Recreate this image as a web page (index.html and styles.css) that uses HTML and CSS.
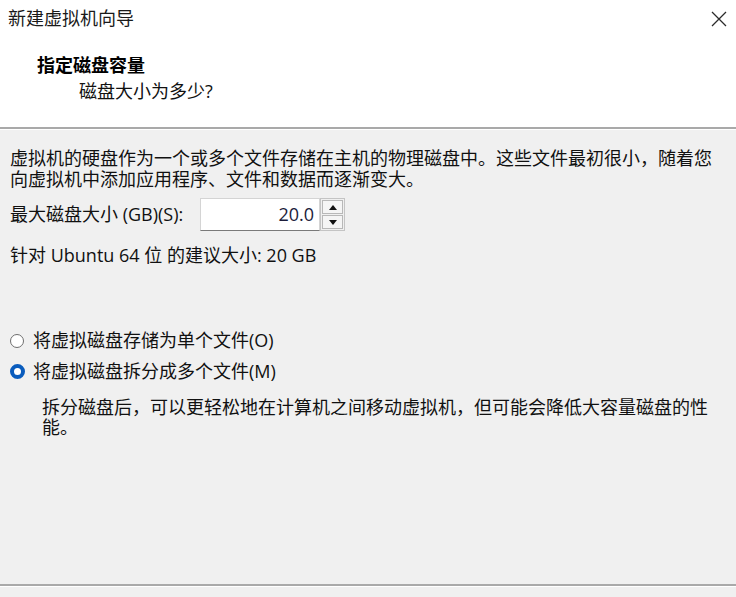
FILE: index.html
```html
<!DOCTYPE html>
<html lang="zh-CN">
<head>
    <meta charset="UTF-8">
    <meta name="viewport" content="width=device-width, initial-scale=1.0">
    <title>新建虚拟机向导</title>
    <link rel="stylesheet" href="styles.css">
</head>
<body>
    <div class="header">
        <div class="title-row">
            <span class="title">新建虚拟机向导</span>
            <svg class="close" width="16" height="16" viewBox="0 0 16 16">
                <path d="M1 1L15 15M15 1L1 15" stroke="#2b2b2b" stroke-width="1.3" fill="none"/>
            </svg>
        </div>
        <div class="heading">指定磁盘容量</div>
        <div class="subheading">磁盘大小为多少?</div>
    </div>
    <div class="separator"></div>

    <div class="content">
        <p class="intro">虚拟机的硬盘作为一个或多个文件存储在主机的物理磁盘中。这些文件最初很小，随着您向虚拟机中添加应用程序、文件和数据而逐渐变大。</p>

        <div class="size-row">
            <label class="size-label">最大磁盘大小 (GB)(S):</label>
            <div class="spinner">
                <div class="spinner-value">20.0</div>
                <div class="spinner-buttons">
                    <div class="spin-btn"><span class="arrow-up"></span></div>
                    <div class="spin-btn"><span class="arrow-down"></span></div>
                </div>
            </div>
        </div>

        <p class="hint">针对 Ubuntu 64 位 的建议大小: 20 GB</p>

        <div class="options">
            <div class="option">
                <span class="radio"></span>
                <span>将虚拟磁盘存储为单个文件(O)</span>
            </div>
            <div class="option">
                <span class="radio checked"></span>
                <span>将虚拟磁盘拆分成多个文件(M)</span>
            </div>
            <p class="option-desc">拆分磁盘后，可以更轻松地在计算机之间移动虚拟机，但可能会降低大容量磁盘的性能。</p>
        </div>
    </div>

    <div class="separator"></div>
    <div class="footer"></div>
</body>
</html>
```

FILE: styles.css
```css
body {
    margin: 0;
    background-color: #f0f0f0;
    font-family: "Open Sans", "Noto Sans CJK SC", sans-serif;
    font-size: 18px;
    line-height: 21px;
    color: #111;
}

.header {
    background-color: #fff;
    height: 127px;
    box-sizing: border-box;
    padding-top: 8px;
}

.title-row {
    display: flex;
    justify-content: space-between;
    align-items: center;
    padding: 0 9px 0 8px;
}

.title {
    color: #1a1a1a;
}

.close {
    display: block;
}

.heading {
    font-weight: bold;
    margin-top: 26px;
    margin-left: 37px;
    color: #000;
}

.subheading {
    margin-top: 5px;
    margin-left: 79px;
}

.separator {
    height: 2px;
    background-color: #a9a9a9;
    border-bottom: 1px solid #fff;
}

.content {
    height: 454px;
    box-sizing: border-box;
    padding: 18px 14px 0 10px;
}

.content p {
    margin: 0;
}

.size-row {
    display: flex;
    align-items: center;
    margin-top: 8px;
}

.size-label {
    width: 190px;
}

.spinner {
    display: flex;
    height: 33px;
}

.spinner-value {
    width: 120px;
    box-sizing: border-box;
    background-color: #fff;
    border: 1px solid #d4d4d4;
    border-bottom: 1px solid #7a7a7a;
    text-align: right;
    padding-right: 5px;
    line-height: 31px;
    color: #1c1c3a;
}

.spinner-buttons {
    width: 25px;
    box-sizing: border-box;
    border: 1px solid #c4c4c4;
    padding: 1px;
    display: flex;
    flex-direction: column;
    gap: 1px;
}

.spin-btn {
    flex: 1;
    background-color: #f5f5f5;
    border: 1px solid #b8b8b8;
    display: flex;
    align-items: center;
    justify-content: center;
}

.arrow-up {
    border-left: 4px solid transparent;
    border-right: 4px solid transparent;
    border-bottom: 5px solid #111;
}

.arrow-down {
    border-left: 4px solid transparent;
    border-right: 4px solid transparent;
    border-top: 5px solid #111;
}

.hint {
    margin-top: 14px !important;
}

.options {
    margin-top: 64px;
    display: flex;
    flex-direction: column;
    gap: 10px;
}

.option {
    display: flex;
    align-items: center;
}

.radio {
    width: 14px;
    height: 14px;
    box-sizing: border-box;
    border: 1px solid #6e6e6e;
    border-radius: 50%;
    background-color: #fff;
    margin-right: 9px;
    flex-shrink: 0;
}

.radio.checked {
    width: 15px;
    height: 15px;
    border: 4.5px solid #0a5cbd;
    margin-right: 8px;
}

.option-desc {
    margin: 5px 0 0 32px !important;
    line-height: 20px;
}

.footer {
    height: 11px;
}
```
